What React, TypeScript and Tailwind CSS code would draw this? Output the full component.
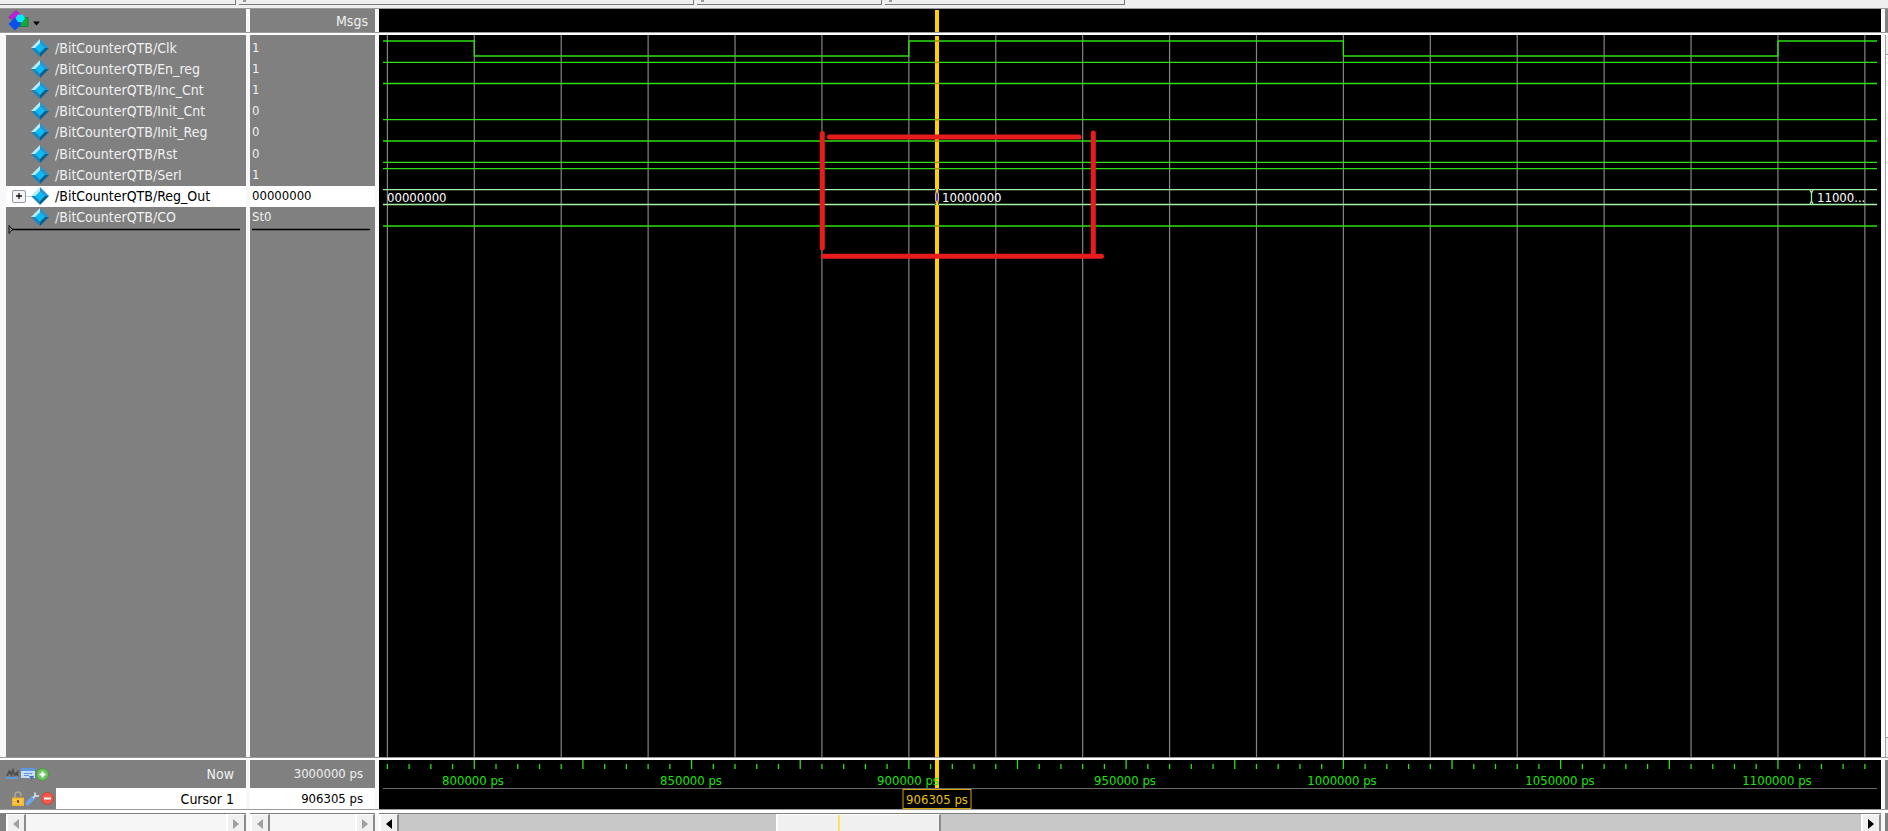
import React from "react";

const FONT = "font-['DejaVu_Sans_Condensed','Noto_Sans',sans-serif]";
const COLS = "grid grid-cols-[246px_125px_minmax(0,1fr)_3px] gap-x-1";

const GREEN = "#2ee014";
const BUS = "#a6f0a6";

const ORIGIN_PS = 778990;
const PX_PER_PS = 0.0043455;
const toX = (ps: number) => (ps - ORIGIN_PS) * PX_PER_PS;
const CURSOR_PS = 906305;
const CURSOR_X = Math.ceil(toX(CURSOR_PS));

type Signal = { name: string; value: string; selected?: boolean };

const signals: Signal[] = [
  { name: "/BitCounterQTB/Clk", value: "1" },
  { name: "/BitCounterQTB/En_reg", value: "1" },
  { name: "/BitCounterQTB/Inc_Cnt", value: "1" },
  { name: "/BitCounterQTB/Init_Cnt", value: "0" },
  { name: "/BitCounterQTB/Init_Reg", value: "0" },
  { name: "/BitCounterQTB/Rst", value: "0" },
  { name: "/BitCounterQTB/SerI", value: "1" },
  { name: "/BitCounterQTB/Reg_Out", value: "00000000", selected: true },
  { name: "/BitCounterQTB/CO", value: "St0" },
];

const gridTimes = Array.from({ length: 18 }, (_, i) => 780000 + i * 20000);
const tickTimes = Array.from({ length: 69 }, (_, i) => 780000 + i * 5000);
const labelTimes = [800000, 850000, 900000, 950000, 1000000, 1050000, 1100000];
const levelRows = [27.3, 48.5, 84.7, 106, 127.3, 133.7, 191];

function Gem() {
  return (
    <svg width="18" height="18" viewBox="0 0 18 18" className="shrink-0" aria-hidden="true">
      <path d="M9 0 0 9h4.500L9 4.500z" fill="#b5ecfb" />
      <path d="M9 0l9 9h-4.500L9 4.500z" fill="#2596d4" />
      <path d="M0 9l9 9v-4.500L4.500 9z" fill="#1585c4" />
      <path d="M18 9l-9 9v-4.500L13.500 9z" fill="#07608f" />
      <path d="M9 4.200 13.800 9 9 13.800 4.200 9z" fill="#0bbcf4" />
    </svg>
  );
}

function SignalNames() {
  return (
    <div className="ml-[6px] bg-[#808080] pt-[2px] text-[14px]">
      <ul className="grid h-[191px] auto-rows-fr">
        {signals.map((s) => (
          <li
            key={s.name}
            className={`flex items-center pl-[6px] leading-4 ${s.selected ? "bg-white text-black" : "text-[#f0f0f0]"}`}
          >
            <span className="flex w-[19px] items-center">
              {s.selected && (
                <>
                  <button
                    type="button"
                    aria-label="Expand Reg_Out"
                    className="flex h-[13px] w-[14px] shrink-0 items-center justify-center rounded-[2px] border border-[#8f98a8] bg-[#f4f4f4]"
                  >
                    <svg width="8" height="8" aria-hidden="true">
                      <path d="M4 1v6M1 4h6" stroke="#111" strokeWidth="1.300" />
                    </svg>
                  </button>
                  <span className="h-px flex-1 bg-[#d0d0d0]" />
                </>
              )}
            </span>
            <Gem />
            <span className="ml-[6px]">{s.name}</span>
          </li>
        ))}
      </ul>
      <svg className="-mt-1 block h-[10px] w-full" aria-hidden="true">
        <path d="M3 1.500v8l3.500-4z" fill="none" stroke="#111" />
        <line x1="6" x2="97.500%" y1="5.500" y2="5.500" stroke="#000" strokeWidth="1.300" />
      </svg>
    </div>
  );
}

function SignalValues() {
  return (
    <div className="bg-[#808080] pt-[2px]">
      <ul className="grid h-[191px] auto-rows-fr">
        {signals.map((s) => (
          <li
            key={s.name}
            className={`flex items-center pl-[2px] leading-4 ${s.selected ? "bg-white text-black" : "text-[#f0f0f0]"}`}
          >
            {s.value}
          </li>
        ))}
      </ul>
      <svg className="-mt-1 block h-[10px] w-full" aria-hidden="true">
        <line x1="2" x2="96%" y1="5.500" y2="5.500" stroke="#000" strokeWidth="1.300" />
      </svg>
    </div>
  );
}

function Cursor({ className }: { className: string }) {
  return (
    <span
      className={`absolute w-1 -translate-x-1/2 bg-[#ffd000] ${className}`}
      style={{ left: CURSOR_X }}
    />
  );
}

function Waves() {
  const fall1 = toX(800000);
  const rise1 = toX(900000);
  const fall2 = toX(1000000);
  const rise2 = toX(1100000);
  const edge = CURSOR_X;
  const edge2 = 1428;
  return (
    <div className="relative overflow-hidden bg-black px-1">
      <div className="relative h-full">
        <svg className="block h-full w-full" role="img" aria-label="Signal waveforms">
          {gridTimes.map((t) => (
            <line key={t} x1={toX(t)} x2={toX(t)} y1="0" y2="100%" stroke="#848484" strokeWidth="1.200" />
          ))}
          <g stroke={GREEN} strokeWidth="1.300" fill="none">
            {levelRows.map((y) => (
              <line key={y} x1="0" x2="100%" y1={y} y2={y} />
            ))}
            <path d={`M0 6H${fall1}V21H${rise1}V6H${fall2}V21H${rise2}V6`} />
            <line x1={rise2} x2="100%" y1="6" y2="6" />
          </g>
          <g stroke={BUS} strokeWidth="1.300" fill="none">
            <line x1="0" x2="100%" y1="154.700" y2="154.700" />
            <line x1="0" x2="100%" y1="169.500" y2="169.500" />
            <path d={`M${edge2 - 1} 155l1.500 3v8l-1.500 3M${edge2 + 2} 155l-1.500 3v8l1.500 3`} />
          </g>
        </svg>
        <Cursor className="top-px bottom-0" />
        <svg className="absolute inset-0 h-full w-full" aria-hidden="true">
          <g stroke="#d87812" strokeWidth="1.500">
            {[6, ...levelRows].map((y) => (
              <line key={y} x1={edge - 2} x2={edge + 2} y1={y} y2={y} />
            ))}
          </g>
          <path
            d={`M${edge - 1.5} 154v3l1 2v6l-1 2v3M${edge + 1.5} 154v3l-1 2v6l1 2v3`}
            stroke="#5040c0"
            fill="none"
          />
          <g stroke="#e81c1c" strokeWidth="5" strokeLinecap="round">
            <path d="M439.300 98.500V213" />
            <path d="M446.500 102H696" />
            <path d="M710.300 98V220.500" />
            <path d="M440.500 221.300H718.500" />
          </g>
        </svg>
        <span className="absolute top-[155px] left-[4px] leading-4 text-white">00000000</span>
        <span className="absolute top-[155px] left-[559px] leading-4 text-white">10000000</span>
        <span className="absolute top-[155px] left-[1434px] leading-4 text-white">11000...</span>
      </div>
    </div>
  );
}

function Timeline() {
  return (
    <div className="relative overflow-hidden bg-black px-1">
      <div className="relative h-full">
        <svg className="block h-[28px] w-full" aria-hidden="true">
          {tickTimes.map((t) => (
            <line
              key={t}
              x1={toX(t)}
              x2={toX(t)}
              y1={t % 25000 === 0 ? 0 : 4}
              y2="9"
              stroke={GREEN}
              strokeWidth="1.300"
            />
          ))}
        </svg>
        <div className="h-px bg-[#6a6a6a]" />
        <Cursor className="top-0 h-[28px]" />
        {labelTimes.map((t) => (
          <span
            key={t}
            className="absolute top-[13px] -translate-x-1/2 leading-4 whitespace-nowrap text-[#1fe010]"
            style={{ left: Math.round(toX(t)) - 1 }}
          >
            {t} ps
          </span>
        ))}
        <span
          className="absolute top-[29px] flex h-[20px] w-[69px] -translate-x-1/2 items-center justify-center border border-[#d8a800] pt-px whitespace-nowrap text-[#e8c010]"
          style={{ left: CURSOR_X }}
        >
          {CURSOR_PS} ps
        </span>
      </div>
    </div>
  );
}

function ArrowButton({ dir, dark }: { dir: "left" | "right"; dark?: boolean }) {
  return (
    <button
      type="button"
      aria-label={`Scroll ${dir}`}
      className="flex w-5 shrink-0 items-center justify-center border-t border-r-2 border-l-2 border-t-white border-r-[#8a8a8a] border-l-white bg-[#f0f0f0] pt-[2px]"
    >
      <svg width="6" height="10" aria-hidden="true">
        <path d={dir === "left" ? "M6 0v10L0 5z" : "M0 0v10l6-5z"} fill={dark ? "#000" : "#a0a0a0"} />
      </svg>
    </button>
  );
}

function IconButton({ label, children }: { label: string; children: React.ReactNode }) {
  return (
    <button type="button" aria-label={label} className="flex h-4 w-[15px] items-center justify-center">
      {children}
    </button>
  );
}

export default function App() {
  return (
    <main className={`flex h-screen min-h-[320px] flex-col overflow-hidden bg-[#f8f8f8] text-[13px] text-[#f0f0f0] ${FONT}`}>
      <div className="flex h-[9px] shrink-0 items-start gap-[3px] border-b border-[#9a9a9a] bg-[#efefef]">
        <div className="h-[5px] w-[236px] border-r border-b border-[#777]" />
        <div className="h-[5px] w-[455px] border-r border-b border-[#777]">
          <div className="ml-1 h-[2px] w-[3px] bg-[#999]" />
        </div>
        <div className="h-[5px] w-[185px] border-r border-b border-[#777]">
          <div className="ml-1 h-[2px] w-[3px] bg-[#999]" />
        </div>
        <div className="h-[5px] w-[240px] border-r border-b border-[#777]">
          <div className="ml-1 h-[2px] w-[3px] bg-[#999]" />
        </div>
      </div>

      <div className={`${COLS} h-[23px] shrink-0`}>
        <div className="flex items-center bg-[#808080] pl-2">
          <button type="button" aria-label="Wave options" className="flex items-center gap-[4px]">
            <svg width="21" height="21" viewBox="0 0 21 21" aria-hidden="true">
              <path d="M8 0.500 14 6 9 8.500 4 9 0.500 7.500z" fill="#c41fd8" stroke="#8a1a9c" strokeWidth="0.600" />
              <path d="M12.500 7.500H20v9h-8.500z" fill="#14a83a" stroke="#0b7f28" strokeWidth="0.800" />
              <path d="M7 7.500l6.500 6.500L7 20.500.500 14z" fill="#0a50ea" />
              <path d="M10 4.500h4.500L17 8l-2.500 4H10L7.500 8z" fill="#08e8fa" />
            </svg>
            <svg width="7" height="5" className="mt-[6px]" aria-hidden="true">
              <path d="M0 0.500h7L3.500 4.500z" fill="#000" />
            </svg>
          </button>
        </div>
        <div className="flex items-center justify-end bg-[#808080] pt-[2px] pr-[7px] text-[14px]">Msgs</div>
        <div className="bg-black px-1">
          <div className="relative h-full">
            <Cursor className="top-px bottom-0" />
          </div>
        </div>
        <div className="bg-[#808080]" />
      </div>

      <div className="h-[3px] shrink-0 border-t border-[#9a9a9a] bg-white" />

      <div className={`${COLS} min-h-0 flex-1`}>
        <SignalNames />
        <SignalValues />
        <Waves />
        <div className="flex flex-col justify-between border-l border-[#a0a0a0] bg-white">
          <span className="h-5 border-b border-[#9a9a9a] bg-[#f0f0f0]" />
          <span className="h-5 border-t border-[#9a9a9a] bg-[#f0f0f0]" />
        </div>
      </div>

      <div className="h-[3px] shrink-0 border-t border-[#9a9a9a] bg-white" />

      <div className={`${COLS} h-[49px] shrink-0`}>
        <div className="flex flex-col bg-[#808080] text-[14px]">
          <div className="flex h-[28px] items-center justify-between pr-3 pl-[5px]">
            <span className="flex items-center">
              <IconButton label="Find">
                <svg width="13" height="14" aria-hidden="true">
                  <path d="M1 9l2.500-5 2 4 1.500-5 2 5 2.500-3v4" stroke="#505050" strokeWidth="1.800" fill="none" />
                  <path d="M0 11h12" stroke="#5b9bd8" strokeWidth="2" />
                </svg>
              </IconButton>
              <IconButton label="Properties">
                <svg width="14" height="14" aria-hidden="true">
                  <path d="M0 1h14v10H0z" fill="#c4dcf6" />
                  <path d="M0 1h14v3H0z" fill="#5f97de" />
                  <path d="M3 6.500h8M3 8.500h5" stroke="#5f97de" />
                  <path d="M8 9h5l-2 4z" fill="#3f70b8" />
                </svg>
              </IconButton>
              <IconButton label="Add cursor">
                <svg width="13" height="13" aria-hidden="true">
                  <circle cx="6.500" cy="6.500" r="6" fill="#6cc45e" stroke="#3f9a36" strokeWidth="0.800" />
                  <path d="M6.500 3.500v6M3.500 6.500h6" stroke="#fff" strokeWidth="2" />
                </svg>
              </IconButton>
            </span>
            <span>Now</span>
          </div>
          <div className="flex h-[21px] pl-[10px]">
            <span className="flex w-[46px] items-center">
              <IconButton label="Lock cursor">
                <svg width="14" height="15" aria-hidden="true">
                  <path d="M4 7V4a3 3 0 0 1 6 0v1" stroke="#b0a890" strokeWidth="1.500" fill="none" />
                  <path d="M1 6.500h12V15H1z" fill="#f5b52c" />
                  <path d="M2 9h10M2 12h10" stroke="#ffd977" />
                  <path d="M7 9v3" stroke="#8a5a10" strokeWidth="2" />
                </svg>
              </IconButton>
              <IconButton label="Edit cursor">
                <svg width="15" height="15" aria-hidden="true">
                  <path d="M2.500 12.500 8 7" stroke="#6fa4ec" strokeWidth="4" strokeLinecap="round" />
                  <path d="M8 7l3-3M10 1.500V5h4" stroke="#c8d4e4" strokeWidth="2" fill="none" />
                </svg>
              </IconButton>
              <IconButton label="Delete cursor">
                <svg width="13" height="13" aria-hidden="true">
                  <circle cx="6.500" cy="6.500" r="6" fill="#f0594c" stroke="#cc3a30" strokeWidth="0.800" />
                  <path d="M3 6.500h7" stroke="#fff" strokeWidth="2" />
                </svg>
              </IconButton>
            </span>
            <span className="flex flex-1 items-center justify-end bg-white pt-px pr-3 text-black">Cursor 1</span>
          </div>
        </div>
        <div className="flex flex-col bg-[#808080]">
          <span className="flex h-[28px] items-center justify-end pr-3">3000000 ps</span>
          <span className="flex h-[21px] items-center justify-end bg-white pt-px pr-3 text-black">906305 ps</span>
        </div>
        <Timeline />
        <div className="bg-[#808080]" />
      </div>

      <div className="h-[4px] shrink-0 border-t border-[#9a9a9a] bg-white" />

      <div className={`${COLS} h-[18px] shrink-0`}>
        <div className="flex border-t border-[#808080] bg-[#f6f6f6]">
          <span className="w-[6px] bg-[#808080]" />
          <ArrowButton dir="left" />
          <span className="flex-1" />
          <ArrowButton dir="right" />
        </div>
        <div className="flex border-t border-[#808080] bg-[#f6f6f6]">
          <ArrowButton dir="left" />
          <span className="flex-1" />
          <ArrowButton dir="right" />
        </div>
        <div className="flex border-t border-[#808080] bg-[#c8c8c8]">
          <ArrowButton dir="left" dark />
          <div className="flex flex-1">
            <span className="w-[25.800%]" />
            <span className="w-[11.300%] border-t border-r-2 border-l-2 border-t-white border-r-[#8a8a8a] border-l-white bg-[#f0f0f0]">
              <span className="ml-[37%] block h-full w-[2px] bg-[#ffe060]" />
            </span>
          </div>
          <ArrowButton dir="right" dark />
        </div>
        <div className="bg-[#808080]" />
      </div>
    </main>
  );
}
